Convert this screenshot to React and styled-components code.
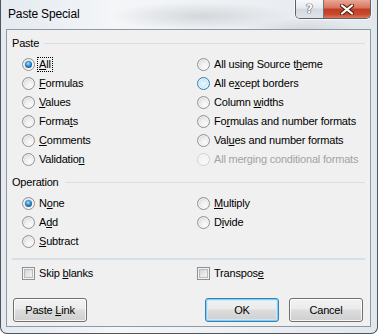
import React from "react";
import styled, { createGlobalStyle, css } from "styled-components";

const Global = createGlobalStyle`
  html, body { margin: 0; padding: 0; background: #ffffff; }
  body { font-family: "Liberation Sans", Arial, sans-serif; font-size: 11px; color: #000; }
  #root { width: 378px; height: 336px; }
`;

const Window = styled.div`
  width: 378px;
  height: 334px;
  box-sizing: border-box;
  border: 1px solid #50555b;
  border-top: none;
  border-radius: 0 0 7px 7px;
  display: flex;
  flex-direction: column;
  background:
    radial-gradient(ellipse 90px 14px at 200px 16px, rgba(160,165,172,0.35), transparent),
    radial-gradient(ellipse 60px 12px at 300px 30px, rgba(150,155,160,0.25), transparent),
    linear-gradient(to right, #e4eaf0 0%, #f4f6f8 30%, #eef1f4 60%, #e2e7ec 100%);
  overflow: hidden;
`;

const TitleBar = styled.div`
  height: 29px;
  flex: none;
  display: flex;
  align-items: flex-start;
`;

const Title = styled.div`
  margin: 7px 0 0 7px;
  font-size: 12px;
  line-height: 14px;
  letter-spacing: -0.15px;
  color: #000;
`;

const CaptionGroup = styled.div`
  margin-left: auto;
  margin-right: 6px;
  display: flex;
  border: 1px solid #5d6268;
  border-top: none;
  border-radius: 0 0 5px 5px;
  overflow: hidden;
  box-shadow: 0 0 0 1px rgba(255,255,255,0.6);
`;

const CaptionButton = styled.div`
  height: 18px;
  display: flex;
  align-items: center;
  justify-content: center;
  ${(p) =>
    p.$close
      ? css`
          width: 46px;
          background: linear-gradient(#e8a897 0%, #d6735d 45%, #c23c22 50%, #c84a30 80%, #dc7a5c 100%);
        `
      : css`
          width: 27px;
          border-right: 1px solid #6f757c;
          background: linear-gradient(#f7f8fa 0%, #e6eaee 45%, #d3d9e0 50%, #dfe4ea 100%);
        `}
`;

const HelpGlyph = styled.span`
  font-family: "DejaVu Sans", sans-serif;
  font-weight: bold;
  font-size: 12px;
  line-height: 12px;
  color: #ffffff;
  text-shadow: 0 0 1px #4a525c, 0 0 1px #4a525c, 0 0 1px #4a525c;
`;

const Client = styled.div`
  flex: 1;
  margin: 0 6px 6px 5px;
  border: 1px solid #8d99a5;
  background: #f0f0f0;
  display: flex;
  flex-direction: column;
  padding: 6px 5px 4px 5px;
`;

const GroupHeader = styled.div`
  height: 14px;
  display: flex;
  align-items: center;
  margin-top: ${(p) => p.$mt || 0}px;
`;

const HeaderText = styled.span`
  line-height: 14px;
  letter-spacing: -0.2px;
`;

const Rule = styled.div`
  flex: 1;
  height: 1px;
  background: #d5dfe5;
  margin-left: ${(p) => p.$ml ?? 6}px;
  margin-top: ${(p) => p.$mt || 0}px;
`;

const OptionsGrid = styled.div`
  display: grid;
  grid-template-columns: 175px 1fr;
  grid-template-rows: repeat(${(p) => p.$rows}, 19px);
  grid-auto-flow: column;
  padding-left: 10px;
  margin-top: ${(p) => p.$mt || 0}px;
`;

const OptionRow = styled.label`
  display: flex;
  align-items: center;
  gap: 2px;
  height: 19px;
  color: ${(p) => (p.$disabled ? "#a3a3a3" : "#000")};
`;

const OptionText = styled.span`
  border: 1px ${(p) => (p.$focus ? "dotted #000" : "solid transparent")};
  padding: 0 1px;
  line-height: 13px;
  letter-spacing: -0.2px;
  white-space: nowrap;
`;

const Key = styled.u`
  text-decoration: underline;
  text-underline-offset: 1px;
`;

const RadioCircle = styled.span`
  position: relative;
  flex: none;
  width: 13px;
  height: 13px;
  box-sizing: border-box;
  border-radius: 50%;
  border: 1px solid
    ${(p) => (p.$hover ? "#3d7bad" : p.$disabled ? "#cfd1d3" : "#8f9296")};
  background: ${(p) =>
    p.$hover
      ? "radial-gradient(circle at 50% 55%, #e9f6fd 0%, #c9e9fb 55%, #9dd5f6 100%)"
      : p.$disabled
      ? "radial-gradient(circle at 60% 65%, #f8f8f8 0%, #ededed 100%)"
      : "radial-gradient(circle at 62% 68%, #fbfbfb 0%, #ececec 45%, #c8c8c8 100%)"};
  box-shadow: inset 0 0 0 1px rgba(255, 255, 255, 0.55);
  ${(p) =>
    p.$checked &&
    css`
      &::after {
        content: "";
        position: absolute;
        left: 2px;
        top: 2px;
        width: 7px;
        height: 7px;
        border-radius: 50%;
        background: radial-gradient(circle at 45% 38%, #b6e6ff 0%, #3a9ad8 35%, #11578e 75%, #0c3f6b 100%);
      }
    `}
`;

const CheckBox = styled.span`
  flex: none;
  width: 13px;
  height: 13px;
  box-sizing: border-box;
  border: 1px solid #8e8f8f;
  background: linear-gradient(135deg, #c9ccd0 0%, #e4e6e8 50%, #f6f6f6 100%);
  box-shadow: inset 0 0 0 1px #f4f4f4, inset 0 0 0 2px #b7babe;
`;

const ButtonRow = styled.div`
  display: flex;
  margin-top: 15px;
  padding: 0 2px 0 1px;
`;

const Button = styled.div`
  width: 74px;
  height: 24px;
  box-sizing: border-box;
  border-radius: 3px;
  display: flex;
  align-items: center;
  justify-content: center;
  letter-spacing: -0.2px;
  white-space: pre;
  margin-left: ${(p) => (p.$push ? "auto" : p.$ml ? p.$ml + "px" : 0)};
  background: linear-gradient(#f2f2f2 0%, #ebebeb 45%, #dddddd 50%, #cfcfcf 100%);
  ${(p) =>
    p.$default
      ? css`
          border: 1px solid #3c7fb1;
          box-shadow: inset 0 0 0 1px #7ed0f7, inset 0 0 0 2px rgba(200,238,252,0.8);
        `
      : css`
          border: 1px solid #707070;
          box-shadow: inset 0 0 0 1px rgba(255, 255, 255, 0.8);
        `}
`;

const ButtonLabel = styled.span`
  white-space: nowrap;
`;

function Radio({ checked, hover, disabled, focus, children }) {
  return (
    <OptionRow $disabled={disabled}>
      <RadioCircle $checked={checked} $hover={hover} $disabled={disabled} />
      <OptionText $focus={focus}>{children}</OptionText>
    </OptionRow>
  );
}

function Check({ children }) {
  return (
    <OptionRow>
      <CheckBox />
      <OptionText>{children}</OptionText>
    </OptionRow>
  );
}

export default function App() {
  return (
    <>
      <Global />
      <Window>
        <TitleBar>
          <Title>Paste Special</Title>
          <CaptionGroup>
            <CaptionButton>
              <HelpGlyph>?</HelpGlyph>
            </CaptionButton>
            <CaptionButton $close>
              <svg width="14" height="11" viewBox="0 0 14 11">
                <path d="M2 1.5 L12 9.5 M12 1.5 L2 9.5" stroke="#5a2418" strokeWidth="4.2" strokeLinecap="round" />
                <path d="M2 1.5 L12 9.5 M12 1.5 L2 9.5" stroke="#ffffff" strokeWidth="2.2" strokeLinecap="round" />
              </svg>
            </CaptionButton>
          </CaptionGroup>
        </TitleBar>
        <Client>
          <GroupHeader>
            <HeaderText>Paste</HeaderText>
            <Rule $ml={5} />
          </GroupHeader>
          <OptionsGrid $rows={6} $mt={5}>
            <Radio checked focus><Key>A</Key>ll</Radio>
            <Radio><Key>F</Key>ormulas</Radio>
            <Radio><Key>V</Key>alues</Radio>
            <Radio>Forma<Key>t</Key>s</Radio>
            <Radio><Key>C</Key>omments</Radio>
            <Radio>Validatio<Key>n</Key></Radio>
            <Radio>All using Source t<Key>h</Key>eme</Radio>
            <Radio hover>All e<Key>x</Key>cept borders</Radio>
            <Radio>Column <Key>w</Key>idths</Radio>
            <Radio>Fo<Key>r</Key>mulas and number formats</Radio>
            <Radio>Val<Key>u</Key>es and number formats</Radio>
            <Radio disabled>All merging conditional formats</Radio>
          </OptionsGrid>
          <GroupHeader $mt={6}>
            <HeaderText>Operation</HeaderText>
            <Rule $ml={6} />
          </GroupHeader>
          <OptionsGrid $rows={3} $mt={5}>
            <Radio checked>N<Key>o</Key>ne</Radio>
            <Radio>A<Key>d</Key>d</Radio>
            <Radio><Key>S</Key>ubtract</Radio>
            <Radio><Key>M</Key>ultiply</Radio>
            <Radio>D<Key>i</Key>vide</Radio>
          </OptionsGrid>
          <Rule $ml={0} $mt={7} />
          <OptionsGrid $rows={1} $mt={4}>
            <Check>Skip <Key>b</Key>lanks</Check>
            <Check>Transpos<Key>e</Key></Check>
          </OptionsGrid>
          <ButtonRow>
            <Button><ButtonLabel>Paste <Key>L</Key>ink</ButtonLabel></Button>
            <Button $push $default><ButtonLabel>OK</ButtonLabel></Button>
            <Button $ml={10}><ButtonLabel>Cancel</ButtonLabel></Button>
          </ButtonRow>
        </Client>
      </Window>
    </>
  );
}
